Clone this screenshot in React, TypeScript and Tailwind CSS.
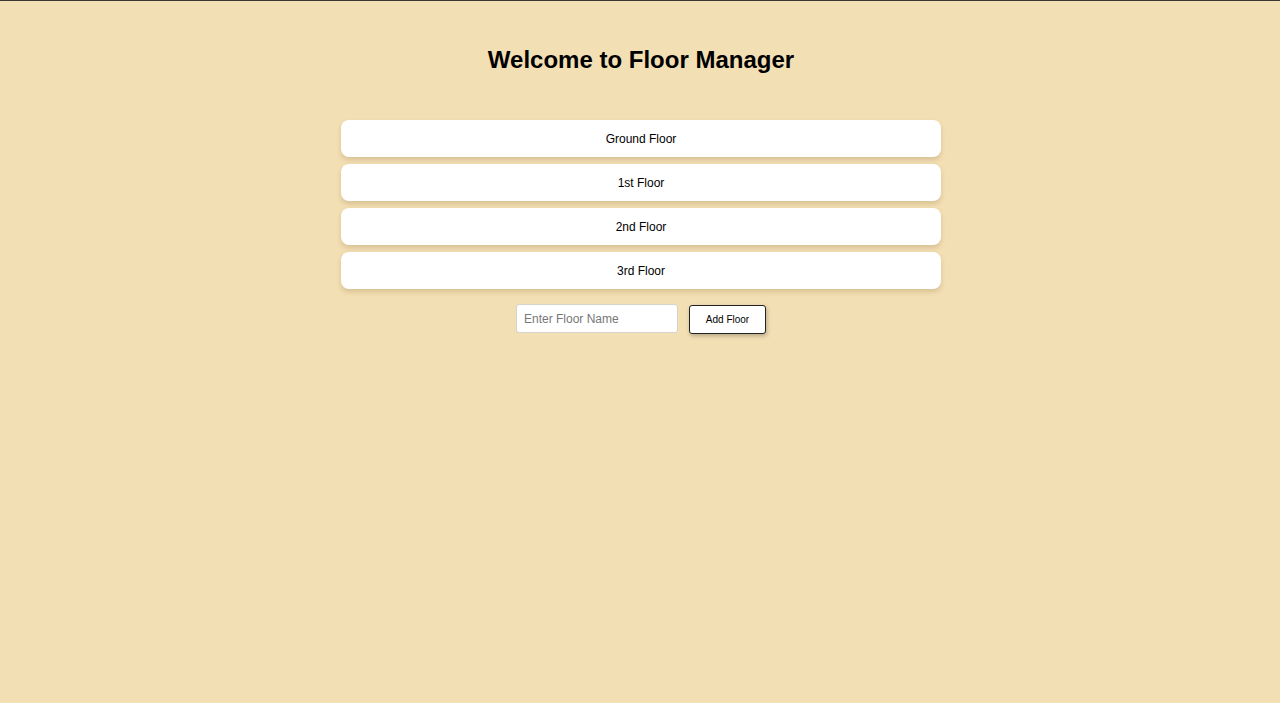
const FLOORS = ["Ground Floor", "1st Floor", "2nd Floor", "3rd Floor"];

export default function App() {
  return (
    <div
      className="min-h-[703px] bg-[#f3dfb4] border-t border-[#3a3530] text-black"
      style={{ fontFamily: '"Liberation Sans", Arial, sans-serif' }}
    >
      <div className="flex flex-col items-center pt-[45px] pl-[2px]">
        <h1 className="text-[24px] leading-[28px] font-bold">
          Welcome to Floor Manager
        </h1>

        {/* Floor list */}
        <div className="mt-[46px] w-[600px] flex flex-col gap-[7px]">
          {FLOORS.map((f) => (
            <div
              key={f}
              className="h-[37px] bg-white rounded-[8px] flex items-center justify-center text-[12px] shadow-[0_3px_5px_rgba(120,90,40,0.22)]"
            >
              {f}
            </div>
          ))}
        </div>

        {/* Add form */}
        <div className="mt-[15px] flex items-start gap-[11px]">
          <input
            placeholder="Enter Floor Name"
            className="w-[162px] h-[29px] bg-white border border-[#d6d2cc] rounded-[3px] px-[7px] text-[12px] placeholder:text-[#777] outline-none"
          />
          <button className="mt-[1px] w-[77px] h-[29px] bg-white border-[1.5px] border-[#222] rounded-[3px] text-[10px] shadow-[1px_2px_4px_rgba(0,0,0,0.25)]">
            Add Floor
          </button>
        </div>
      </div>
    </div>
  );
}
